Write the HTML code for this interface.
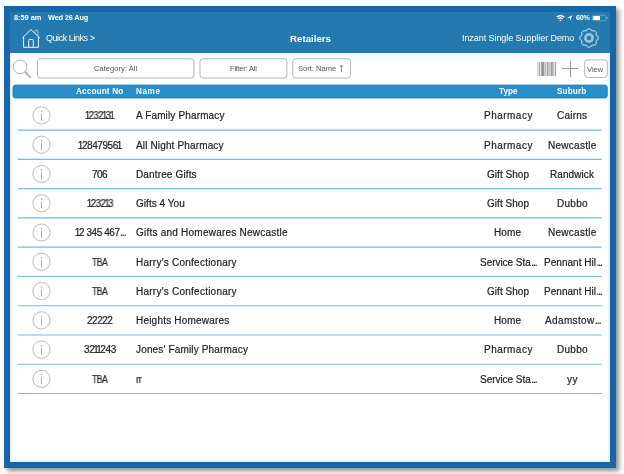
<!DOCTYPE html><html><head><meta charset="utf-8"><title>Retailers</title><style>
html,body{margin:0;padding:0;background:#fff;}
body{width:624px;height:474px;position:relative;overflow:hidden;font-family:"Liberation Sans",sans-serif;}
.abs{position:absolute;}
.t{position:absolute;white-space:nowrap;transform-origin:0 50%;will-change:transform;}
.el{letter-spacing:-0.95px;margin-left:0.4px;}
.n1{margin:0 -1.15px;}
#frame{left:4px;top:6px;width:612px;height:462px;background:#1667a9;box-shadow:3px 3px 5px rgba(0,0,0,0.46);}
#inner{left:10px;top:12px;width:600px;height:450px;background:#fff;box-shadow:inset 0 0 2.5px 1px #e6e3f0;}
#hdr{left:10px;top:12px;width:600px;height:41px;background:#2479ae;}
.box{border:1px solid #bdbdbd;border-radius:3px;box-sizing:border-box;background:#fff;}
.sep{left:18px;width:583.6px;height:1px;background:#8cc3e6;}
</style></head><body>
<div id="frame" class="abs"></div><div id="inner" class="abs"></div><div id="hdr" class="abs"></div>
<svg class="abs" style="left:556px;top:14px" width="52" height="9" viewBox="0 0 52 9">
<path d="M0.8 3.2 Q4.5 -0.3 8.2 3.2" fill="none" stroke="#fff" stroke-width="1.3"/>
<path d="M2.3 4.9 Q4.5 2.8 6.7 4.9" fill="none" stroke="#fff" stroke-width="1.2"/>
<circle cx="4.5" cy="6.3" r="0.9" fill="#fff"/>
<path d="M16.5 1.2 L11.2 3.7 L13.8 4.1 L14.2 6.6 Z" fill="#fff"/>
<rect x="36.4" y="1.2" width="13.7" height="5.6" rx="1.7" fill="none" stroke="#fff" stroke-opacity="0.5" stroke-width="0.6"/>
<rect x="37.1" y="1.9" width="6.9" height="4.2" rx="0.9" fill="#fff"/>
<path d="M50.9 3 Q51.8 4 50.9 5" fill="none" stroke="#fff" stroke-opacity="0.55" stroke-width="0.7"/>
</svg>
<svg class="abs" style="left:21px;top:28px" width="20" height="21" viewBox="0 0 20 21">
<g fill="none" stroke="#fff" stroke-opacity="0.93">
<path d="M1.2 10 L10 1.6 L18.8 10" stroke-width="1" stroke-linejoin="miter"/>
<path d="M2.6 9 V19.3 H17.4 V9" stroke-width="1"/>
<path d="M7.7 19.3 V12.4 Q7.7 11.5 8.6 11.5 H11.4 Q12.3 11.5 12.3 12.4 V19.3" stroke-width="1"/>
<path d="M13.9 5 V3 Q13.9 2.2 14.7 2.2 H16.1 Q16.9 2.2 16.9 3 V7.9" stroke-width="0.7" stroke-opacity="0.8"/>
</g>
</svg>
<svg class="abs" style="left:578.8px;top:28.2px" width="20" height="20" viewBox="0 0 20 20"><path d="M19.15 10.00 L19.14 10.36 L19.10 10.72 L19.05 11.07 L18.97 11.42 L18.67 11.73 L18.22 11.97 L17.81 12.20 L17.48 12.43 L17.23 12.67 L17.07 12.93 L17.00 13.23 L17.01 13.57 L17.08 13.97 L17.21 14.42 L17.35 14.91 L17.35 15.34 L17.15 15.64 L16.94 15.93 L16.72 16.21 L16.47 16.47 L16.21 16.72 L15.93 16.94 L15.64 17.15 L15.34 17.35 L14.91 17.35 L14.42 17.21 L13.97 17.08 L13.57 17.01 L13.23 17.00 L12.93 17.07 L12.67 17.23 L12.43 17.48 L12.20 17.81 L11.97 18.22 L11.73 18.67 L11.42 18.97 L11.07 19.05 L10.72 19.10 L10.36 19.14 L10.00 19.15 L9.64 19.14 L9.28 19.10 L8.93 19.05 L8.58 18.97 L8.27 18.67 L8.03 18.22 L7.80 17.81 L7.57 17.48 L7.33 17.23 L7.07 17.07 L6.77 17.00 L6.43 17.01 L6.03 17.08 L5.58 17.21 L5.09 17.35 L4.66 17.35 L4.36 17.15 L4.07 16.94 L3.79 16.72 L3.53 16.47 L3.28 16.21 L3.06 15.93 L2.85 15.64 L2.65 15.34 L2.65 14.91 L2.79 14.42 L2.92 13.97 L2.99 13.57 L3.00 13.23 L2.93 12.93 L2.77 12.67 L2.52 12.43 L2.19 12.20 L1.78 11.97 L1.33 11.73 L1.03 11.42 L0.95 11.07 L0.90 10.72 L0.86 10.36 L0.85 10.00 L0.86 9.64 L0.90 9.28 L0.95 8.93 L1.03 8.58 L1.33 8.27 L1.78 8.03 L2.19 7.80 L2.52 7.57 L2.77 7.33 L2.93 7.07 L3.00 6.77 L2.99 6.43 L2.92 6.03 L2.79 5.58 L2.65 5.09 L2.65 4.66 L2.85 4.36 L3.06 4.07 L3.28 3.79 L3.53 3.53 L3.79 3.28 L4.07 3.06 L4.36 2.85 L4.66 2.65 L5.09 2.65 L5.58 2.79 L6.03 2.92 L6.43 2.99 L6.77 3.00 L7.07 2.93 L7.33 2.77 L7.57 2.52 L7.80 2.19 L8.03 1.78 L8.27 1.33 L8.58 1.03 L8.93 0.95 L9.28 0.90 L9.64 0.86 L10.00 0.85 L10.36 0.86 L10.72 0.90 L11.07 0.95 L11.42 1.03 L11.73 1.33 L11.97 1.78 L12.20 2.19 L12.43 2.52 L12.67 2.77 L12.93 2.93 L13.23 3.00 L13.57 2.99 L13.97 2.92 L14.42 2.79 L14.91 2.65 L15.34 2.65 L15.64 2.85 L15.93 3.06 L16.21 3.28 L16.47 3.53 L16.72 3.79 L16.94 4.07 L17.15 4.36 L17.35 4.66 L17.35 5.09 L17.21 5.58 L17.08 6.03 L17.01 6.43 L17.00 6.77 L17.07 7.07 L17.23 7.33 L17.48 7.57 L17.81 7.80 L18.22 8.03 L18.67 8.27 L18.97 8.58 L19.05 8.93 L19.10 9.28 L19.14 9.64 Z" fill="none" stroke="#fff" stroke-opacity="0.95" stroke-width="1" stroke-linejoin="round"/><circle cx="10" cy="10" r="3.6" fill="none" stroke="#fff" stroke-opacity="0.55" stroke-width="2.7"/></svg>
<svg class="abs" style="left:11px;top:58px" width="22" height="22" viewBox="0 0 22 22">
<circle cx="9.1" cy="8.9" r="6.85" fill="none" stroke="#a8a8a8" stroke-width="0.9"/>
<path d="M14.2 14 L19.3 19.1" stroke="#b4b4b4" stroke-width="2" stroke-linecap="round"/>
</svg>
<svg class="abs" style="left:0;top:50px" width="624" height="40" viewBox="0 50 624 40"><rect x="37.50" y="58.80" width="156.50" height="19.20" rx="2.8" fill="#fff" stroke="#b6b6b6" stroke-width="1"/><rect x="200.00" y="58.80" width="86.90" height="19.20" rx="2.8" fill="#fff" stroke="#b6b6b6" stroke-width="1"/><rect x="292.80" y="58.80" width="57.60" height="19.20" rx="2.8" fill="#fff" stroke="#b6b6b6" stroke-width="1"/><rect x="584.70" y="59.90" width="22.60" height="17.60" rx="2.8" fill="#fff" stroke="#b6b6b6" stroke-width="1"/></svg>
<svg class="abs" style="left:338px;top:64px" width="8" height="9" viewBox="0 0 8 9"><path d="M3.5 8 V1.2 M1.9 2.9 L3.5 1.2 L5.1 2.9" fill="none" stroke="#555" stroke-width="0.7"/></svg>
<svg class="abs" style="left:537px;top:62px" width="20" height="14" viewBox="0 0 20 14" shape-rendering="crispEdges"><rect x="0" y="0" width="1" height="14" fill="#d2d2d2"/><rect x="1" y="0" width="1" height="14" fill="#e2e2e2"/><rect x="2" y="0" width="1" height="14" fill="#a8a8a8"/><rect x="3" y="0" width="1" height="14" fill="#eeeeee"/><rect x="4" y="0" width="1" height="14" fill="#a2a2a2"/><rect x="5" y="0" width="1" height="14" fill="#929292"/><rect x="6" y="0" width="1" height="14" fill="#9a9a9a"/><rect x="7" y="0" width="1" height="14" fill="#d0d0d0"/><rect x="8" y="0" width="1" height="14" fill="#c0c0c0"/><rect x="9" y="0" width="1" height="14" fill="#dddddd"/><rect x="10" y="0" width="1" height="14" fill="#a8a8a8"/><rect x="11" y="0" width="1" height="14" fill="#c8c8c8"/><rect x="12" y="0" width="1" height="14" fill="#c8c8c8"/><rect x="13" y="0" width="1" height="14" fill="#d0d0d0"/><rect x="14" y="0" width="1" height="14" fill="#a0a0a0"/><rect x="15" y="0" width="1" height="14" fill="#b0b0b0"/><rect x="16" y="0" width="1" height="14" fill="#c2c2c2"/><rect x="17" y="0" width="1" height="14" fill="#e2e2e2"/><rect x="18" y="0" width="1" height="14" fill="#a8a8a8"/><rect x="19" y="0" width="1" height="14" fill="#f0f0f0"/></svg>
<div class="abs" style="left:561.9px;top:68.1px;width:16.6px;height:1px;background:#999;"></div>
<div class="abs" style="left:569.7px;top:60.5px;width:1px;height:16.4px;background:#999;"></div>
<svg class="abs" style="left:12px;top:84px" width="597" height="16" viewBox="0 0 597 16"><rect x="0.9" y="1" width="594.5" height="13.05" rx="2.7" fill="#298dc7" stroke="#2283c1" stroke-width="0.8"/></svg>
<svg class="abs" style="left:0;top:100px" width="624" height="300" viewBox="0 100 624 300"><line x1="17.9" x2="601.6" y1="130.10" y2="130.10" stroke="#78b8e1" stroke-width="1.15"/><g fill="none" stroke="#acacac" stroke-width="0.85"><circle cx="41.5" cy="115.45" r="8.6"/></g><rect x="41" y="113.65" width="1" height="7" fill="#acacac"/><circle cx="41.5" cy="111.35" r="0.8" fill="#acacac"/><line x1="17.9" x2="601.6" y1="159.37" y2="159.37" stroke="#78b8e1" stroke-width="1.15"/><g fill="none" stroke="#acacac" stroke-width="0.85"><circle cx="41.5" cy="144.72" r="8.6"/></g><rect x="41" y="142.92" width="1" height="7" fill="#acacac"/><circle cx="41.5" cy="140.62" r="0.8" fill="#acacac"/><line x1="17.9" x2="601.6" y1="188.64" y2="188.64" stroke="#78b8e1" stroke-width="1.15"/><g fill="none" stroke="#acacac" stroke-width="0.85"><circle cx="41.5" cy="173.99" r="8.6"/></g><rect x="41" y="172.19" width="1" height="7" fill="#acacac"/><circle cx="41.5" cy="169.89" r="0.8" fill="#acacac"/><line x1="17.9" x2="601.6" y1="217.91" y2="217.91" stroke="#78b8e1" stroke-width="1.15"/><g fill="none" stroke="#acacac" stroke-width="0.85"><circle cx="41.5" cy="203.26" r="8.6"/></g><rect x="41" y="201.46" width="1" height="7" fill="#acacac"/><circle cx="41.5" cy="199.16" r="0.8" fill="#acacac"/><line x1="17.9" x2="601.6" y1="247.18" y2="247.18" stroke="#78b8e1" stroke-width="1.15"/><g fill="none" stroke="#acacac" stroke-width="0.85"><circle cx="41.5" cy="232.53" r="8.6"/></g><rect x="41" y="230.73" width="1" height="7" fill="#acacac"/><circle cx="41.5" cy="228.43" r="0.8" fill="#acacac"/><line x1="17.9" x2="601.6" y1="276.45" y2="276.45" stroke="#78b8e1" stroke-width="1.15"/><g fill="none" stroke="#acacac" stroke-width="0.85"><circle cx="41.5" cy="261.80" r="8.6"/></g><rect x="41" y="260.00" width="1" height="7" fill="#acacac"/><circle cx="41.5" cy="257.70" r="0.8" fill="#acacac"/><line x1="17.9" x2="601.6" y1="305.72" y2="305.72" stroke="#78b8e1" stroke-width="1.15"/><g fill="none" stroke="#acacac" stroke-width="0.85"><circle cx="41.5" cy="291.07" r="8.6"/></g><rect x="41" y="289.27" width="1" height="7" fill="#acacac"/><circle cx="41.5" cy="286.97" r="0.8" fill="#acacac"/><line x1="17.9" x2="601.6" y1="334.99" y2="334.99" stroke="#78b8e1" stroke-width="1.15"/><g fill="none" stroke="#acacac" stroke-width="0.85"><circle cx="41.5" cy="320.34" r="8.6"/></g><rect x="41" y="318.54" width="1" height="7" fill="#acacac"/><circle cx="41.5" cy="316.24" r="0.8" fill="#acacac"/><line x1="17.9" x2="601.6" y1="364.26" y2="364.26" stroke="#78b8e1" stroke-width="1.15"/><g fill="none" stroke="#acacac" stroke-width="0.85"><circle cx="41.5" cy="349.61" r="8.6"/></g><rect x="41" y="347.81" width="1" height="7" fill="#acacac"/><circle cx="41.5" cy="345.51" r="0.8" fill="#acacac"/><line x1="17.9" x2="601.6" y1="393.53" y2="393.53" stroke="#78b8e1" stroke-width="1.15"/><g fill="none" stroke="#acacac" stroke-width="0.85"><circle cx="41.5" cy="378.88" r="8.6"/></g><rect x="41" y="377.08" width="1" height="7" fill="#acacac"/><circle cx="41.5" cy="374.78" r="0.8" fill="#acacac"/></svg>
<div class="t" style="left:13.60px;top:12.00px;font-size:7.4px;line-height:11px;color:#fff;font-weight:bold;letter-spacing:-0.043px;">8:59 am</div>
<div class="t" style="left:47.70px;top:12.00px;font-size:7.4px;line-height:11px;color:#fff;font-weight:bold;letter-spacing:-0.172px;">Wed 26 Aug</div>
<div class="t" style="left:575.60px;top:12.00px;font-size:7.4px;line-height:11px;color:#fff;font-weight:bold;letter-spacing:-0.407px;transform:scaleX(0.9787);">60%</div>
<div class="t" style="left:45.70px;top:32.00px;font-size:9px;line-height:12px;color:#fff;letter-spacing:-0.443px;">Quick Links &gt;</div>
<div class="t" style="left:289.60px;top:32.00px;font-size:9.7px;line-height:13px;color:#fff;font-weight:bold;letter-spacing:0.008px;">Retailers</div>
<div class="t" style="left:461.50px;top:32.00px;font-size:9px;line-height:12px;color:#fff;letter-spacing:-0.068px;">Inzant Single Supplier Demo</div>
<div class="t" style="left:94.00px;top:63.00px;font-size:7.5px;line-height:11px;color:#555;letter-spacing:0.061px;">Category: All</div>
<div class="t" style="left:229.70px;top:63.00px;font-size:7.5px;line-height:11px;color:#555;letter-spacing:-0.190px;">Filter: All</div>
<div class="t" style="left:297.80px;top:63.00px;font-size:7.5px;line-height:11px;color:#555;letter-spacing:0.027px;">Sort: Name</div>
<div class="t" style="left:587.20px;top:64.00px;font-size:7.5px;line-height:11px;color:#555;letter-spacing:0.032px;">View</div>
<div class="t" style="left:76.30px;top:86.00px;font-size:8.2px;line-height:11px;color:#fff;font-weight:bold;letter-spacing:0.140px;">Account No</div>
<div class="t" style="left:135.60px;top:86.00px;font-size:8.2px;line-height:11px;color:#fff;font-weight:bold;letter-spacing:0.551px;">Name</div>
<div class="t" style="left:498.50px;top:86.00px;font-size:8.2px;line-height:11px;color:#fff;font-weight:bold;letter-spacing:0.018px;">Type</div>
<div class="t" style="left:557.40px;top:86.00px;font-size:8.2px;line-height:11px;color:#fff;font-weight:bold;letter-spacing:0.110px;">Suburb</div>
<div class="t" style="left:86.05px;top:109.00px;font-size:10px;line-height:13px;color:#222;-webkit-text-stroke:0.2px #222;letter-spacing:-0.550px;transform:scaleX(0.9565);"><span class="n1">1</span>232<span class="n1">1</span>3<span class="n1">1</span></div>
<div class="t" style="left:135.60px;top:109.00px;font-size:10px;line-height:13px;color:#222;-webkit-text-stroke:0.2px #222;letter-spacing:0.145px;">A Family Pharmacy</div>
<div class="t" style="left:483.80px;top:109.00px;font-size:10px;line-height:13px;color:#222;-webkit-text-stroke:0.2px #222;letter-spacing:0.484px;">Pharmacy</div>
<div class="t" style="left:557.40px;top:109.00px;font-size:10px;line-height:13px;color:#222;-webkit-text-stroke:0.2px #222;letter-spacing:0.221px;">Cairns</div>
<div class="t" style="left:78.70px;top:139.00px;font-size:10px;line-height:13px;color:#222;-webkit-text-stroke:0.2px #222;letter-spacing:-0.412px;"><span class="n1">1</span>2847956<span class="n1">1</span></div>
<div class="t" style="left:135.60px;top:139.00px;font-size:10px;line-height:13px;color:#222;-webkit-text-stroke:0.2px #222;letter-spacing:0.145px;">All Night Pharmacy</div>
<div class="t" style="left:483.80px;top:139.00px;font-size:10px;line-height:13px;color:#222;-webkit-text-stroke:0.2px #222;letter-spacing:0.484px;">Pharmacy</div>
<div class="t" style="left:548.05px;top:139.00px;font-size:10px;line-height:13px;color:#222;-webkit-text-stroke:0.2px #222;letter-spacing:0.267px;">Newcastle</div>
<div class="t" style="left:91.99px;top:168.00px;font-size:10px;line-height:13px;color:#222;-webkit-text-stroke:0.2px #222;letter-spacing:-0.550px;">706</div>
<div class="t" style="left:135.60px;top:168.00px;font-size:10px;line-height:13px;color:#222;-webkit-text-stroke:0.2px #222;letter-spacing:0.141px;">Dantree Gifts</div>
<div class="t" style="left:486.80px;top:168.00px;font-size:10px;line-height:13px;color:#222;-webkit-text-stroke:0.2px #222;letter-spacing:0.034px;">Gift Shop</div>
<div class="t" style="left:549.95px;top:168.00px;font-size:10px;line-height:13px;color:#222;-webkit-text-stroke:0.2px #222;letter-spacing:0.079px;">Randwick</div>
<div class="t" style="left:87.62px;top:197.00px;font-size:10px;line-height:13px;color:#222;-webkit-text-stroke:0.2px #222;letter-spacing:-0.550px;transform:scaleX(0.9780);"><span class="n1">1</span>232<span class="n1">1</span>3</div>
<div class="t" style="left:135.60px;top:197.00px;font-size:10px;line-height:13px;color:#222;-webkit-text-stroke:0.2px #222;letter-spacing:0.041px;">Gifts 4 You</div>
<div class="t" style="left:486.80px;top:197.00px;font-size:10px;line-height:13px;color:#222;-webkit-text-stroke:0.2px #222;letter-spacing:0.034px;">Gift Shop</div>
<div class="t" style="left:556.90px;top:197.00px;font-size:10px;line-height:13px;color:#222;-webkit-text-stroke:0.2px #222;letter-spacing:0.273px;">Dubbo</div>
<div class="t" style="left:75.50px;top:226.00px;font-size:10px;line-height:13px;color:#222;-webkit-text-stroke:0.2px #222;letter-spacing:-0.415px;"><span class="n1">1</span>2 345 467<span class="el">...</span></div>
<div class="t" style="left:135.60px;top:226.00px;font-size:10px;line-height:13px;color:#222;-webkit-text-stroke:0.2px #222;letter-spacing:0.232px;">Gifts and Homewares Newcastle</div>
<div class="t" style="left:494.25px;top:226.00px;font-size:10px;line-height:13px;color:#222;-webkit-text-stroke:0.2px #222;letter-spacing:0.129px;">Home</div>
<div class="t" style="left:548.05px;top:226.00px;font-size:10px;line-height:13px;color:#222;-webkit-text-stroke:0.2px #222;letter-spacing:0.267px;">Newcastle</div>
<div class="t" style="left:92.00px;top:256.00px;font-size:10px;line-height:13px;color:#222;-webkit-text-stroke:0.2px #222;letter-spacing:-0.550px;transform:scaleX(0.8566);">TBA</div>
<div class="t" style="left:135.60px;top:256.00px;font-size:10px;line-height:13px;color:#222;-webkit-text-stroke:0.2px #222;letter-spacing:0.238px;">Harry's Confectionary</div>
<div class="t" style="left:479.55px;top:256.00px;font-size:10px;line-height:13px;color:#222;-webkit-text-stroke:0.2px #222;letter-spacing:-0.037px;">Service Sta<span class="el">...</span></div>
<div class="t" style="left:543.65px;top:256.00px;font-size:10px;line-height:13px;color:#222;-webkit-text-stroke:0.2px #222;letter-spacing:0.032px;">Pennant Hil<span class="el">...</span></div>
<div class="t" style="left:92.00px;top:285.00px;font-size:10px;line-height:13px;color:#222;-webkit-text-stroke:0.2px #222;letter-spacing:-0.550px;transform:scaleX(0.8566);">TBA</div>
<div class="t" style="left:135.60px;top:285.00px;font-size:10px;line-height:13px;color:#222;-webkit-text-stroke:0.2px #222;letter-spacing:0.238px;">Harry's Confectionary</div>
<div class="t" style="left:486.80px;top:285.00px;font-size:10px;line-height:13px;color:#222;-webkit-text-stroke:0.2px #222;letter-spacing:0.034px;">Gift Shop</div>
<div class="t" style="left:543.65px;top:285.00px;font-size:10px;line-height:13px;color:#222;-webkit-text-stroke:0.2px #222;letter-spacing:0.032px;">Pennant Hil<span class="el">...</span></div>
<div class="t" style="left:86.85px;top:314.00px;font-size:10px;line-height:13px;color:#222;-webkit-text-stroke:0.2px #222;letter-spacing:-0.487px;">22222</div>
<div class="t" style="left:135.60px;top:314.00px;font-size:10px;line-height:13px;color:#222;-webkit-text-stroke:0.2px #222;letter-spacing:0.204px;">Heights Homewares</div>
<div class="t" style="left:494.25px;top:314.00px;font-size:10px;line-height:13px;color:#222;-webkit-text-stroke:0.2px #222;letter-spacing:0.129px;">Home</div>
<div class="t" style="left:544.55px;top:314.00px;font-size:10px;line-height:13px;color:#222;-webkit-text-stroke:0.2px #222;letter-spacing:0.362px;">Adamstow<span class="el">...</span></div>
<div class="t" style="left:84.00px;top:343.00px;font-size:10px;line-height:13px;color:#222;-webkit-text-stroke:0.2px #222;letter-spacing:-0.338px;">32<span class="n1">1</span><span class="n1">1</span>243</div>
<div class="t" style="left:135.60px;top:343.00px;font-size:10px;line-height:13px;color:#222;-webkit-text-stroke:0.2px #222;letter-spacing:0.157px;">Jones' Family Pharmacy</div>
<div class="t" style="left:483.80px;top:343.00px;font-size:10px;line-height:13px;color:#222;-webkit-text-stroke:0.2px #222;letter-spacing:0.484px;">Pharmacy</div>
<div class="t" style="left:556.90px;top:343.00px;font-size:10px;line-height:13px;color:#222;-webkit-text-stroke:0.2px #222;letter-spacing:0.273px;">Dubbo</div>
<div class="t" style="left:92.00px;top:373.00px;font-size:10px;line-height:13px;color:#222;-webkit-text-stroke:0.2px #222;letter-spacing:-0.550px;transform:scaleX(0.8566);">TBA</div>
<div class="t" style="left:135.60px;top:373.00px;font-size:10px;line-height:13px;color:#222;-webkit-text-stroke:0.2px #222;letter-spacing:-0.550px;transform:scaleX(0.9439);">rr</div>
<div class="t" style="left:479.55px;top:373.00px;font-size:10px;line-height:13px;color:#222;-webkit-text-stroke:0.2px #222;letter-spacing:-0.037px;">Service Sta<span class="el">...</span></div>
<div class="t" style="left:567.20px;top:373.00px;font-size:10px;line-height:13px;color:#222;-webkit-text-stroke:0.2px #222;letter-spacing:0.400px;">yy</div>
</body></html>
